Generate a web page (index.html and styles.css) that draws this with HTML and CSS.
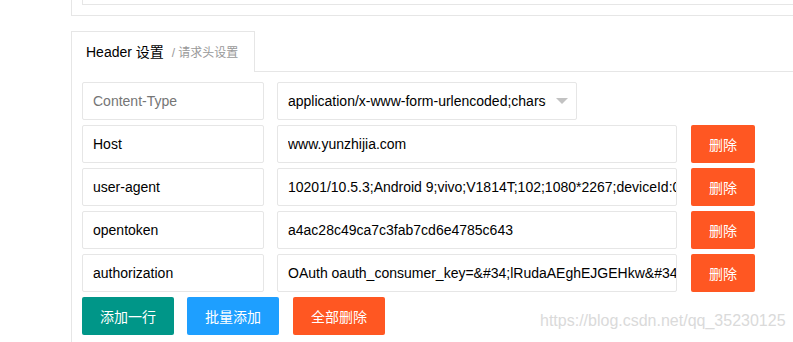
FILE: index.html
```html
<!DOCTYPE html>
<html lang="zh-CN">
<head>
    <meta charset="UTF-8">
    <meta name="viewport" content="width=device-width, initial-scale=1.0">
    <title>Header 设置</title>
    <link rel="stylesheet" href="styles.css">
</head>
<body>
    <div class="page">
        <div class="prev-card">
            <div class="prev-inner"></div>
        </div>
        <div class="tab">
            <ul class="tab-title">
                <li class="this">Header 设置 <span class="sub">/ 请求头设置</span></li>
            </ul>
            <div class="tab-content">
                <div class="kv-row">
                    <input type="text" class="field key" placeholder="Content-Type">
                    <div class="select">
                        <input type="text" class="field value" value="application/x-www-form-urlencoded;charset=UTF-8" readonly>
                        <i class="arrow"></i>
                    </div>
                </div>
                <div class="kv-row">
                    <input type="text" class="field key" value="Host">
                    <input type="text" class="field value wide" value="www.yunzhijia.com">
                    <button class="btn btn-danger btn-del">删除</button>
                </div>
                <div class="kv-row">
                    <input type="text" class="field key" value="user-agent">
                    <input type="text" class="field value wide" value="10201/10.5.3;Android 9;vivo;V1814T;102;1080*2267;deviceId:0a1b2c3d4e5f;">
                    <button class="btn btn-danger btn-del">删除</button>
                </div>
                <div class="kv-row">
                    <input type="text" class="field key" value="opentoken">
                    <input type="text" class="field value wide" value="a4ac28c49ca7c3fab7cd6e4785c643">
                    <button class="btn btn-danger btn-del">删除</button>
                </div>
                <div class="kv-row">
                    <input type="text" class="field key" value="authorization">
                    <input type="text" class="field value wide" value="OAuth oauth_consumer_key=&amp;#34;lRudaAEghEJGEHkw&amp;#34;,oauth_signature_method=&amp;#34;HMAC-SHA1&amp;#34;">
                    <button class="btn btn-danger btn-del">删除</button>
                </div>
                <div class="actions">
                    <button class="btn btn-primary">添加一行</button>
                    <button class="btn btn-normal">批量添加</button>
                    <button class="btn btn-danger btn-clear">全部删除</button>
                </div>
            </div>
        </div>
        <div class="watermark">https://blog.csdn.net/qq_35230125</div>
    </div>
</body>
</html>
```

FILE: styles.css
```css
html, body {
    margin: 0;
    padding: 0;
    background-color: #fff;
    overflow: hidden;
}
body {
    font-family: 'Liberation Sans', Arial, 'Noto Sans CJK SC', sans-serif;
    font-size: 14px;
    color: #333;
    height: 342px;
    position: relative;
}
.page {
    margin-left: 71px;
}
.prev-card {
    height: 15px;
    border-left: 1px solid #e6e6e6;
    border-bottom: 1px solid #e6e6e6;
}
.prev-inner {
    margin-left: 10px;
    height: 4px;
    border-left: 1px solid #e6e6e6;
    border-bottom: 1px solid #e6e6e6;
}
.tab {
    margin-top: 15px;
}
.tab-title {
    display: flex;
    list-style: none;
    margin: 0;
    padding: 0;
    height: 41px;
    box-sizing: border-box;
    border-bottom: 1px solid #e6e6e6;
}
.tab-title li {
    height: 41px;
    box-sizing: border-box;
    margin-bottom: -1px;
    padding: 0 16px 0 14px;
    line-height: 40px;
    background-color: #fff;
    border: 1px solid #e6e6e6;
    border-bottom: none;
    color: #000;
    white-space: nowrap;
}
.tab-title .sub {
    margin-left: 4px;
    font-size: 12px;
    color: #999;
}
.tab-content {
    border-left: 1px solid #e6e6e6;
    padding: 10px 10px 10px 10px;
}
.kv-row {
    display: flex;
    align-items: center;
    margin-bottom: 5px;
}
.field {
    height: 38px;
    box-sizing: border-box;
    border: 1px solid #e6e6e6;
    border-radius: 2px;
    padding: 0 10px;
    font-family: inherit;
    font-size: 14px;
    color: #000;
    background-color: #fff;
    outline: none;
}
.field::placeholder {
    color: #757575;
}
.key {
    width: 182px;
    margin-right: 13px;
}
.value {
    width: 300px;
    padding-right: 30px;
}
.value.wide {
    width: 400px;
    padding-right: 0;
}
.select {
    position: relative;
}
.select .arrow {
    position: absolute;
    right: 9px;
    top: 16px;
    border: 6px solid transparent;
    border-top-color: #c2c2c2;
    border-bottom: none;
}
.btn {
    height: 38px;
    box-sizing: border-box;
    border: none;
    border-radius: 2px;
    padding: 0;
    color: #fff;
    font-family: 'Liberation Sans', Arial, 'Noto Sans CJK SC', sans-serif;
    font-size: 14px;
    cursor: pointer;
}
.btn-del {
    width: 64px;
    margin-left: 14px;
}
.btn-primary {
    background-color: #009688;
}
.btn-normal {
    background-color: #1e9fff;
}
.btn-danger {
    background-color: #ff5722;
}
.actions {
    display: flex;
    gap: 13px;
}
.actions .btn {
    width: 92px;
}
.actions .btn-clear {
    margin-left: 1px;
}
.watermark {
    position: absolute;
    left: 540px;
    top: 312px;
    font-size: 16px;
    color: #dadada;
    white-space: nowrap;
}
```
